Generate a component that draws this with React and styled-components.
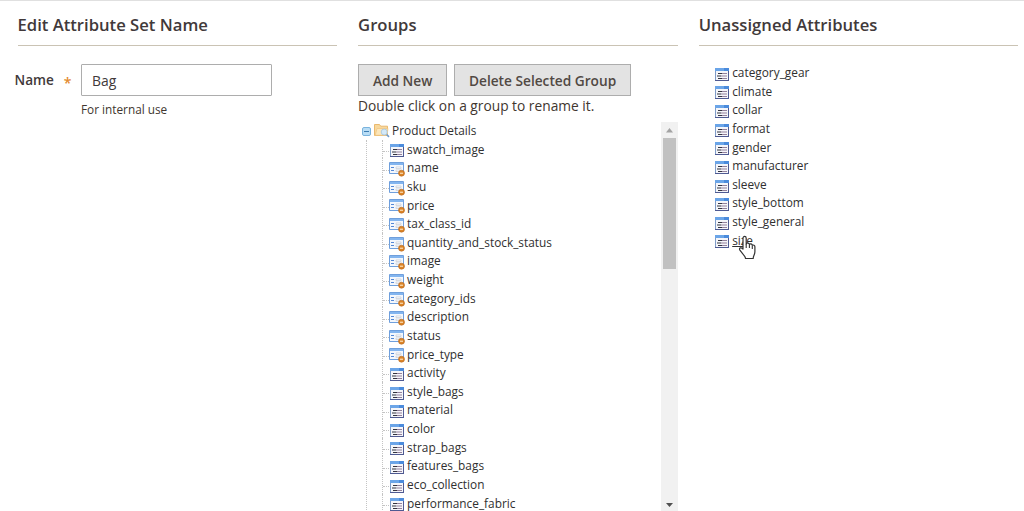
import React from "react";
import styled, { createGlobalStyle } from "styled-components";

const GlobalStyle = createGlobalStyle`
  * {
    box-sizing: border-box;
  }

  body {
    margin: 0;
    background: #fff;
    color: #41362f;
    font-family: "Open Sans", sans-serif;
    overflow: hidden;
  }
`;

const Page = styled.main`
  display: grid;
  grid-template-columns: repeat(3, 319.6px);
  column-gap: 21px;
  height: 511px;
  padding-left: 17.5px;
  border-top: 1px solid #e0e0e0;
  overflow: hidden;
`;

const Column = styled.section`
  display: flex;
  flex-direction: column;
  min-width: 0;
  height: 510px;
`;

const Title = styled.h2`
  flex: none;
  height: 45px;
  margin: 0;
  padding-top: 12px;
  border-bottom: 1px solid #cac3b4;
  color: #41393a;
  font-size: 16.65px;
  font-weight: 600;
  line-height: 24px;
  white-space: nowrap;
`;

const Field = styled.div`
  display: grid;
  grid-template-columns: 66.5px 191px;
  margin: 18px 0 0 -3px;
`;

const Label = styled.label`
  display: flex;
  gap: 10px;
  height: 32px;
  color: #41393a;
  font-size: 13.6px;
  font-weight: 600;
  line-height: 32px;
`;

const Required = styled.span`
  color: #e38a2e;
  font-size: 14px;
  line-height: 38px;
`;

const Input = styled.input`
  width: 191px;
  height: 32px;
  padding: 0 10px;
  border: 1px solid #adadad;
  border-radius: 1px;
  color: #41393a;
  font: 13.9px "Open Sans", sans-serif;
  outline: none;
`;

const Note = styled.p`
  grid-column: 2;
  margin: 5px 0 0;
  font-size: 11.8px;
  line-height: 17px;
`;

const Buttons = styled.div`
  display: flex;
  flex: none;
  gap: 7px;
  margin-top: 18px;
`;

const Button = styled.button`
  width: ${(props) => props.$width}px;
  height: 32px;
  padding: 0;
  border: 1px solid #adadad;
  background: #e3e3e3;
  color: #514943;
  font: 600 13.7px "Open Sans", sans-serif;
  white-space: nowrap;
`;

const Hint = styled.p`
  flex: none;
  height: 26px;
  margin: 0;
  font-size: 13.75px;
  line-height: 19px;
`;

const TreePanel = styled.div`
  display: flex;
  flex: 1;
  justify-content: space-between;
  min-height: 0;
  overflow: hidden;
`;

const Tree = styled.div`
  flex: 1;
  margin-top: -1px;
  padding-left: 4px;
`;

const Row = styled.div`
  display: flex;
  align-items: center;
  height: 18.64px;
  font-size: 11.85px;
  line-height: 18px;
  color: #303030;
  white-space: nowrap;
`;

const Branch = styled.ul`
  margin: 0 0 0 4px;
  padding: 0 0 0 15px;
  border-left: 1px dotted #c4c4c4;
  list-style: none;
`;

const BranchItem = styled(Row).attrs({ as: "li" })`
  border-left: 1px dotted #c4c4c4;

  &::before {
    content: "";
    width: 6px;
    margin-top: 5px;
    border-top: 1px dotted #c4c4c4;
  }
`;

const Icon = styled.svg`
  flex: none;
  display: block;
  margin: ${(props) => props.$margin || "0"};
`;

const Scrollbar = styled.div`
  display: flex;
  flex-direction: column;
  align-items: center;
  justify-content: space-between;
  width: 17px;
  padding: 6px 0 4px;
  background: #f1f1f1;
`;

const Thumb = styled.div`
  width: 13px;
  height: 131px;
  margin: 5px 0 auto;
  background: #c1c1c1;
`;

const List = styled.ul`
  margin: 17px 0 0 16.5px;
  padding: 0;
  list-style: none;
`;

const Name = styled.span`
  margin-top: -0.6px;
  text-decoration: ${(props) => (props.$hovered ? "underline" : "none")};
`;

const HandCursor = styled.svg`
  position: absolute;
  left: 738px;
  top: 235px;
`;

const details = [
  { name: "swatch_image" },
  { name: "name", system: true },
  { name: "sku", system: true },
  { name: "price", system: true },
  { name: "tax_class_id", system: true },
  { name: "quantity_and_stock_status", system: true },
  { name: "image", system: true },
  { name: "weight", system: true },
  { name: "category_ids", system: true },
  { name: "description", system: true },
  { name: "status", system: true },
  { name: "price_type", system: true },
  { name: "activity" },
  { name: "style_bags" },
  { name: "material" },
  { name: "color" },
  { name: "strap_bags" },
  { name: "features_bags" },
  { name: "eco_collection" },
  { name: "performance_fabric" },
];

const unassigned = [
  "category_gear",
  "climate",
  "collar",
  "format",
  "gender",
  "manufacturer",
  "sleeve",
  "style_bottom",
  "style_general",
  "size",
];

function AttributeIcon({ margin }) {
  return (
    <Icon width="14" height="13" viewBox="0 0 14 13" $margin={margin}>
      <path d="M0 0h14v13H0z" fill="#7f9cc8" />
      <path d="M0 0h14v3H0z" fill="#4b8bdc" />
      <path d="M0 0h9v3H0z" fill="#6ba5e8" />
      <path d="M1 3h12v9H1z" fill="#f5f6fa" />
      <path d="M13 3h1v10H0v-1h13z" fill="#4f5a92" />
      <path d="M3 5h4v1H3zM2 7.5h4v1H2zM3 10h4v1H3z" fill="#33343f" />
      <path d="M7 5h5v1H7zM6 7.5h6v1H6zM7 10h5v1H7z" fill="#93809c" />
    </Icon>
  );
}

function SystemIcon() {
  return (
    <Icon width="17" height="16" viewBox="0 0 17 16" $margin="3px 1px 0 0">
      <path d="M.5 1.5h14v11H.5z" fill="#f3f7fd" stroke="#6f9fdc" />
      <path d="M1 2h13v2H1z" fill="#83b5ef" />
      <path d="M2 6h3v1H2zM2 9h3v1H2z" fill="#5488d6" />
      <path d="M7 6h5v1.5H7zM7 9h5v1.5H7z" fill="#fff" stroke="#c0c5cd" strokeWidth=".6" />
      <circle cx="12.5" cy="12.2" r="3" fill="#db8427" stroke="#b5671e" strokeWidth=".6" />
      <path d="M11 11.7h3v1h-3z" fill="#fff0d8" />
    </Icon>
  );
}

function CollapseIcon() {
  return (
    <Icon width="9" height="9" viewBox="0 0 9 9" $margin="3px 3px 0 0">
      <rect x=".5" y=".5" width="8" height="8" rx="1.5" fill="#b9ddf5" stroke="#7ab3dd" />
      <path d="M2 4h5v1H2z" fill="#3b7bb0" />
    </Icon>
  );
}

function FolderIcon() {
  return (
    <Icon width="16" height="15" viewBox="0 0 16 15" $margin="1px 2px 0 0">
      <path d="M.5 12.5V1.5h5l1.2 1.7h6.8v9.3z" fill="#f8d89c" stroke="#eab96e" />
      <path d="M1.2 12.3L3 5.5h11l-1 6.8z" fill="#fce6ba" stroke="#efc37c" strokeWidth=".7" />
      <circle cx="10.2" cy="9" r="3" fill="#d4e9f8" stroke="#a9c8e0" strokeWidth=".9" />
      <path d="M12.6 11.5l2.4 2.4" stroke="#6f9bcb" strokeWidth="1.6" />
    </Icon>
  );
}

function App() {
  return (
    <>
      <GlobalStyle />
      <Page>
        <Column>
          <Title>Edit Attribute Set Name</Title>
          <Field>
            <Label htmlFor="set-name">
              Name <Required>*</Required>
            </Label>
            <Input id="set-name" defaultValue="Bag" />
            <Note>For internal use</Note>
          </Field>
        </Column>
        <Column>
          <Title>Groups</Title>
          <Buttons>
            <Button $width={89}>Add New</Button>
            <Button $width={177}>Delete Selected Group</Button>
          </Buttons>
          <Hint>Double click on a group to rename it.</Hint>
          <TreePanel>
            <Tree>
              <Row>
                <CollapseIcon />
                <FolderIcon />
                <Name>Product Details</Name>
              </Row>
              <Branch>
                {details.map((item) => (
                  <BranchItem key={item.name}>
                    {item.system ? (
                      <SystemIcon />
                    ) : (
                      <AttributeIcon margin="4px 3px 0 1px" />
                    )}
                    <Name>{item.name}</Name>
                  </BranchItem>
                ))}
              </Branch>
            </Tree>
            <Scrollbar>
              <Icon width="7" height="5" viewBox="0 0 7 5">
                <path d="M3.5 0L7 4.5H0z" fill="#a3a3a3" />
              </Icon>
              <Thumb />
              <Icon width="7" height="4" viewBox="0 0 7 4">
                <path d="M0 0h7L3.5 4z" fill="#505050" />
              </Icon>
            </Scrollbar>
          </TreePanel>
        </Column>
        <Column>
          <Title>Unassigned Attributes</Title>
          <List>
            {unassigned.map((name) => (
              <Row as="li" key={name}>
                <AttributeIcon margin="4px 3px 0 0" />
                <Name $hovered={name === "size"}>{name}</Name>
              </Row>
            ))}
          </List>
        </Column>
      </Page>
      <HandCursor width="19" height="25" viewBox="0 0 19 25">
        <path
          d="M5 14V3.2C5 .7 8.2.7 8.2 3.2V9c.5-1.5 3-1.2 3.2.4.8-1 2.7-.5 2.9.9.9-.7 2.6-.1 2.6 1.5v5c0 3-1.7 4-1.7 6.7H7.5c0-2.5-3.7-5.4-5.6-8.4-1.3-2.2 1.2-3.3 3.1-1.1z"
          fill="#fff"
          stroke="#333"
          strokeWidth="1.2"
          strokeLinejoin="round"
        />
        <path d="M8.2 9v4M11.4 10v3M14.3 11v3" stroke="#333" strokeWidth="1.1" />
      </HandCursor>
    </>
  );
}

export default App;
